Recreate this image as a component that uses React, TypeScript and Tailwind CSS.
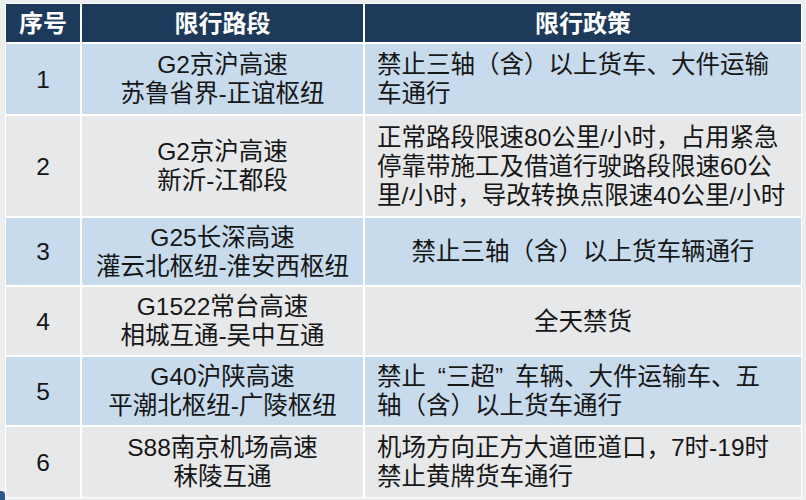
import React from 'react';

type Row = {
  no: string;
  road: string[];
  policy: React.ReactNode[];
  center?: boolean;
  h: string;
  bg: string;
};

// 引号单独占位，和参考图里的间距一致
const Q = ({ open }: { open?: boolean }) => (
  <span className={`inline-block w-[20px] ${open ? 'text-right' : 'text-left'}`}>{open ? '“' : '”'}</span>
);

const rows: Row[] = [
  {
    no: '1',
    road: ['G2京沪高速', '苏鲁省界-正谊枢纽'],
    policy: ['禁止三轴（含）以上货车、大件运输', '车通行'],
    h: 'h-[70px]',
    bg: 'bg-[#c7dbec]',
  },
  {
    no: '2',
    road: ['G2京沪高速', '新沂-江都段'],
    policy: ['正常路段限速80公里/小时，占用紧急', '停靠带施工及借道行驶路段限速60公', '里/小时，导改转换点限速40公里/小时'],
    h: 'h-[100px]',
    bg: 'bg-[#e7e8ea]',
  },
  {
    no: '3',
    road: ['G25长深高速', '灌云北枢纽-淮安西枢纽'],
    policy: ['禁止三轴（含）以上货车辆通行'],
    center: true,
    h: 'h-[67px]',
    bg: 'bg-[#c7dbec]',
  },
  {
    no: '4',
    road: ['G1522常台高速', '相城互通-吴中互通'],
    policy: ['全天禁货'],
    center: true,
    h: 'h-[68px]',
    bg: 'bg-[#e7e8ea]',
  },
  {
    no: '5',
    road: ['G40沪陕高速', '平潮北枢纽-广陵枢纽'],
    policy: [
      <>
        禁止<Q open />三超<Q />车辆、大件运输车、五
      </>,
      '轴（含）以上货车通行',
    ],
    h: 'h-[68px]',
    bg: 'bg-[#c7dbec]',
  },
  {
    no: '6',
    road: ['S88南京机场高速', '秣陵互通'],
    policy: ['机场方向正方大道匝道口，7时-19时', '禁止黄牌货车通行'],
    h: 'h-[70px]',
    bg: 'bg-[#e7e8ea]',
  },
];

const font = "font-['Liberation_Sans','Noto_Sans_CJK_SC',sans-serif]";

export default function App() {
  return (
    <div className={`relative w-[806px] h-[500px] bg-[#edeef0] overflow-hidden pt-[3px] pl-[5px] ${font}`}>
      <div className="w-[797px] bg-white p-px grid grid-cols-[74px_281px_436px] gap-[2px] text-[24.5px] leading-[29px] text-[#161616]">
        <div className="h-[38px] bg-[#1e3a5a] text-white text-[24px] font-bold flex items-center justify-center">序号</div>
        <div className="h-[38px] bg-[#1e3a5a] text-white text-[24px] font-bold flex items-center justify-center">限行路段</div>
        <div className="h-[38px] bg-[#1e3a5a] text-white text-[24px] font-bold flex items-center justify-center">限行政策</div>

        {rows.map((r) => (
          <React.Fragment key={r.no}>
            <div className={`${r.h} ${r.bg} flex items-center justify-center`}>{r.no}</div>
            <div className={`${r.h} ${r.bg} flex flex-col items-center justify-center text-center whitespace-nowrap`}>
              {r.road.map((t) => (
                <span key={t}>{t}</span>
              ))}
            </div>
            <div
              className={`${r.h} ${r.bg} flex flex-col justify-center whitespace-nowrap ${
                r.center ? 'items-center' : 'items-start pl-[12px]'
              }`}
            >
              {r.policy.map((t, i) => (
                <span key={i}>{t}</span>
              ))}
            </div>
          </React.Fragment>
        ))}
      </div>
      <div className="absolute left-0 bottom-0 w-[5px] h-[9px] bg-[#2a5a8a] rounded-tr-sm" />
    </div>
  );
}
